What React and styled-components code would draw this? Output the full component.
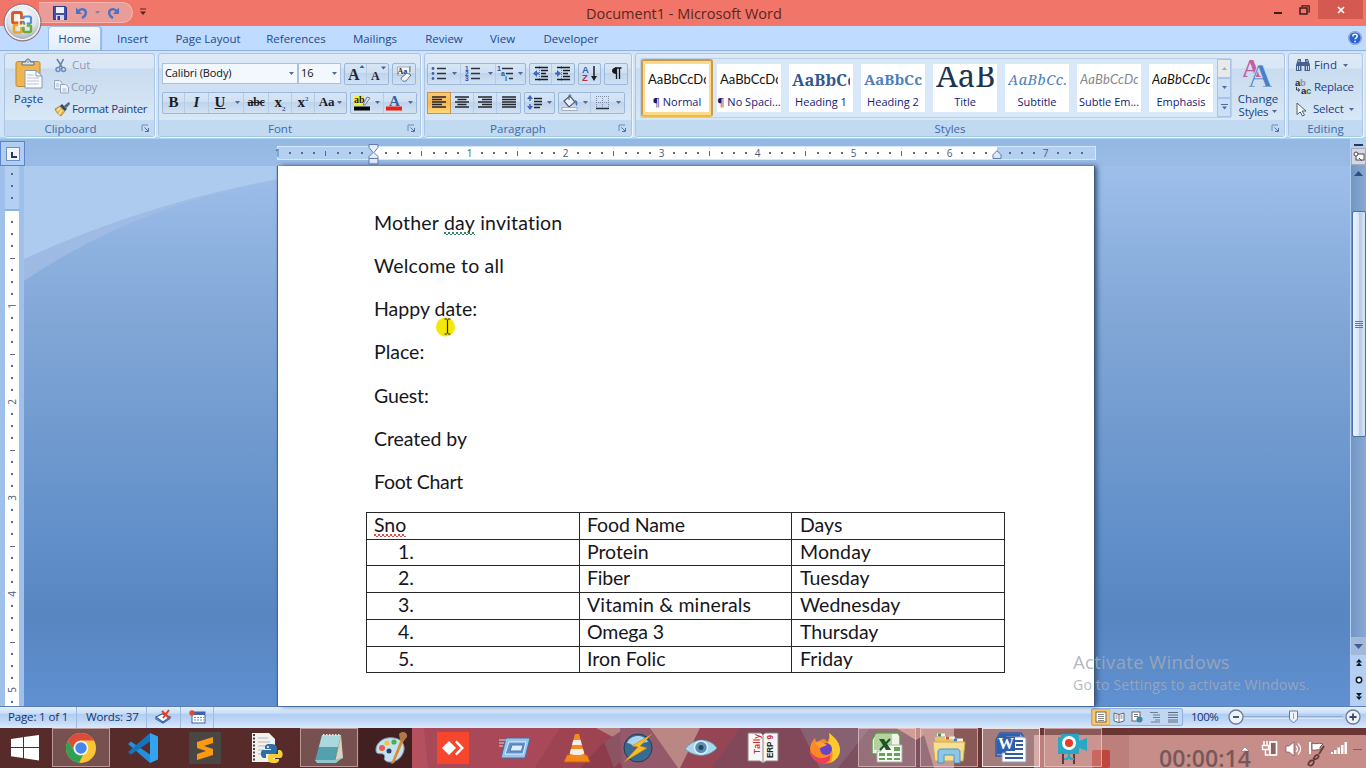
import React from "react";
import styled, { createGlobalStyle, css } from "styled-components";

const Global = createGlobalStyle`
  *{box-sizing:border-box}
  html,body{margin:0;padding:0;overflow:hidden}
  body{width:1366px;height:768px;font-family:"Open Sans","Noto Sans",sans-serif;font-size:11.5px;color:#15428b}
  svg{display:block;flex:none}
`;

/* ---------- shell ---------- */
const Shell = styled.div`
  width:1366px;height:768px;display:flex;flex-direction:column;overflow:hidden;position:relative;background:#9abbe6;
`;
const TitleBar = styled.header`
  height:26px;flex:none;background:#f17569;display:flex;align-items:flex-start;
`;
const QuickAccess = styled.div`
  width:94px;height:21px;margin:2px 0 0 39px;display:flex;align-items:center;gap:1px;padding-left:14px;
  background:#e99c98;border:1px solid #f3b5ae;border-left:none;border-radius:0 11px 11px 0;
`;
const QuickMore = styled.div`padding:8px 0 0 7px;`;
const Title = styled.h1`
  margin:0 0 0 439px;width:204px;font-weight:400;font-size:14.5px;line-height:27.5px;color:#582720;white-space:nowrap;
`;
const WindowButtons = styled.div`
  margin-left:auto;display:flex;align-items:flex-start;padding-right:3px;
`;
const WinButton = styled.div`
  width:${p => p.$w}px;height:19px;display:flex;align-items:center;justify-content:center;background:${p => p.$close ? "#d45a51" : "transparent"};
`;
const Orb = styled.div`position:absolute;left:3px;top:3px;width:39px;height:39px;z-index:3;`;

const Tabs = styled.nav`
  height:24px;flex:none;display:flex;align-items:flex-end;background:#bfdbff;padding-left:48px;
`;
const Tab = styled.div`
  width:${p => p.$w}px;height:23px;line-height:23px;text-align:center;font-size:11.5px;white-space:nowrap;color:#234a8c;
  ${p => p.$active && css`
    height:24px;line-height:23px;background:linear-gradient(#f4f8fd,#e3edf8);border:1px solid #9dc0ea;border-bottom:none;border-radius:4px 4px 0 0;
    box-shadow:1px 0 1px #8fb4e6;
  `}
`;
const Help = styled.div`margin-left:auto;padding:0 4px 5px 0;`;

/* ---------- ribbon ---------- */
const Ribbon = styled.section`
  height:89px;flex:none;display:flex;gap:3px;padding:2px 3px 2px 4px;
  background:#d1e3f6;border-top:1px solid #8db2e3;border-bottom:2px solid #a6d6f2;
`;
const Group = styled.div`
  width:${p => p.$w}px;height:84px;display:flex;flex-direction:column;border:1px solid #aac6e4;border-radius:3px;overflow:hidden;
  background:linear-gradient(#dee9f5 0,#d9e6f4 14px,#c9dbef 15px,#d8e8f6 68px);
  box-shadow:1px 1px 0 #eef6fd;
`;
const GroupBody = styled.div`flex:1;min-height:0;display:flex;padding:${p => p.$p || "0"};`;
const GroupLabel = styled.div`
  height:16px;flex:none;background:#c1d9f1;display:flex;align-items:center;color:#3e6aaa;font-size:11.5px;
  span{flex:1;text-align:center;line-height:15px;padding-right:${p => p.$pr || 0}px}
  svg{margin-right:4px}
`;
const BigButton = styled.div`
  width:${p => p.$w}px;display:flex;flex-direction:column;align-items:center;line-height:13px;font-size:11.5px;color:#15428b;padding-top:${p => p.$top}px;
`;
const BigText = styled.div`display:flex;align-items:center;gap:4px;height:13px;margin-top:${p => p.$mt || 0}px;letter-spacing:${p => p.$ls || 0}px;`;
const CommandList = styled.div`display:flex;flex-direction:column;padding:${p => p.$p};`;
const Command = styled.div`
  height:22px;display:flex;align-items:center;gap:${p => p.$gap || 3}px;font-size:11.5px;line-height:16px;white-space:nowrap;color:${p => p.$dim ? "#8d9bb4" : "#1d3f86"};
  letter-spacing:${p => p.$ls || 0}px;
`;
const Rows = styled.div`display:flex;flex-direction:column;gap:7px;`;
const Row = styled.div`display:flex;gap:${p => p.$gap}px;`;
const Combo = styled.div`
  width:${p => p.$w}px;height:21px;background:#f3f8fe;border:1px solid #abc1de;display:flex;align-items:center;justify-content:space-between;
  color:#111;font-size:11px;line-height:14px;padding:0 3px 1px 2px;letter-spacing:-.1px;
`;
const Segment = styled.div`
  height:22px;display:flex;border:1px solid #9ab7dc;border-radius:2px;
  background:linear-gradient(#d8e7f6 0,#cfdff1 45%,#bfd3eb 46%,#d0e1f3 100%);
`;
const Cell = styled.div`
  width:${p => p.$w}px;display:flex;align-items:center;justify-content:center;padding-bottom:2px;
  ${p => p.$edge && css`border-right:1px solid #b5cbe6;`}
  ${p => p.$on && css`background:linear-gradient(#fbc87c,#fdb54c 50%,#ffd87a);box-shadow:0 0 0 1px #c79346;`}
`;
const Glyph = styled.span`
  font-family:"Liberation Serif",serif;font-weight:700;color:#1d1d26;font-size:${p => p.$s || 15}px;line-height:16px;
  font-style:${p => p.$i ? "italic" : "normal"};text-decoration:${p => p.$d || "none"};letter-spacing:${p => p.$ls || 0}px;
  sup,sub{font-size:7px;line-height:0;color:#3156a8}
`;

/* ---------- styles gallery ---------- */
const Gallery = styled.div`
  width:592px;height:60px;display:flex;border:1px solid #b9d0ed;background:#d9e8f8;border-radius:2px;
`;
const StyleCard = styled.div`
  width:72px;height:58px;padding:5px 4px;
  ${p => p.$on && css`padding:3px 2px;border:2px solid #cf9a48;border-bottom-color:#eebb40;border-radius:3px;background:#fcd98d;`}
`;
const StyleInner = styled.div`
  width:64px;height:48px;background:#fff;overflow:hidden;display:flex;flex-direction:column;
`;
const Sample = styled.div`
  height:28px;margin:3px 3px 0;overflow:hidden;white-space:nowrap;line-height:${p => p.$lh || 25}px;
  font-family:${p => p.$f || "Lato"},sans-serif;font-size:${p => p.$s || 13}px;color:${p => p.$c || "#111"};font-weight:${p => p.$b ? 700 : 400};
  font-style:${p => p.$i ? "italic" : "normal"};letter-spacing:${p => p.$ls || 0}px;
`;
const StyleName = styled.div`
  height:17px;line-height:13px;text-align:center;color:#151a75;font-size:11px;white-space:nowrap;
`;
const GalleryNav = styled.div`width:14px;display:flex;flex-direction:column;`;
const NavButton = styled.div`
  flex:1;border:1px solid #a9c4e6;display:flex;align-items:center;justify-content:center;background:${p => p.$off ? "#e8e9eb" : "#cbdff5"};
`;

/* ---------- workspace ---------- */
const Workspace = styled.main`
  height:567px;flex:none;display:flex;background:#9abbe6;
`;
const Main = styled.div`width:1350px;display:flex;flex-direction:column;`;
const RulerRow = styled.div`height:27px;display:flex;align-items:center;position:relative;background:linear-gradient(#94b8e3,#9abbe5);`;
const TabSelector = styled.div`
  width:25px;height:25px;margin:2px 252px 0 0;border:1px solid #5b86cd;background:#b1cdf2;display:flex;align-items:center;justify-content:center;
`;
const TabBox = styled.div`width:14px;height:14px;border:1px solid #6c8fc6;background:#f0f5fc;padding:4px 0 0 4px;`;
const HRuler = styled.div`
  width:819px;height:14px;margin-top:1px;border:1px solid #d4e8fc;display:flex;
  background:linear-gradient(90deg,#b3cff2 0 96px,#fff 96px 719px,#b3cff2 719px);
`;
const HMark = styled.span`
  width:12px;flex:none;margin-left:${p => p.$first ? "-6.5px" : 0};height:12px;line-height:12px;font-size:10px;color:#4d5a74;display:flex;align-items:center;justify-content:center;
`;
const Dot = styled.i`width:2px;height:2px;background:#5b6880;`;
const Tick = styled.i`width:${p => p.$v ? 5 : 1}px;height:${p => p.$v ? 1 : 5}px;background:#5b6880;`;
const Marker = styled.div`position:absolute;left:${p => p.$x}px;top:${p => p.$y}px;`;
const Canvas = styled.div`
  flex:1;min-height:0;display:flex;position:relative;
  background:linear-gradient(#9fbfeb 0,#8eb2e0 80px,#7fa5d5 170px,#618fc9 370px,#5886c1 450px,#6090d1 540px);
`;
const VRuler = styled.div`width:24px;flex:none;padding:0 5px;background:#9fc0ea;z-index:1;`;
const VStrip = styled.div`
  width:14px;height:540px;overflow:hidden;
  background:linear-gradient(#b3cff2 0 43px,#8eb1e0 43px 45px,#fff 45px);
`;
const VMark = styled.div`
  height:12px;display:flex;align-items:center;justify-content:center;font-size:10px;color:#4d5a74;line-height:12px;
  margin-top:${p => p.$first ? "2px" : 0};
  span{transform:rotate(-90deg)}
`;
const Wave = styled.svg`position:absolute;left:24px;top:0;`;
const Page = styled.article`
  width:816px;margin-left:254px;background:#fff;position:relative;padding:34.5px 0 0 88px;color:#16161c;
  box-shadow:1px 0 0 #3d5779,3px 0 5px #33557e,-1px 0 1px #47699b;
  font-family:Lato,Carlito,sans-serif;font-size:19.5px;font-variant-ligatures:none;
`;
const Para = styled.p`
  margin:0 0 0 8px;height:43.3px;line-height:43.3px;white-space:nowrap;letter-spacing:${p => p.$ls || 0}px;
`;
const Wavy = styled.span`
  position:relative;
  &::after{
    content:"";position:absolute;left:0;right:0;bottom:-1px;height:3px;
    background:
      linear-gradient(45deg,transparent 35%,${p => p.$c} 35% 55%,transparent 55%) 0 0/4px 3px repeat-x,
      linear-gradient(-45deg,transparent 35%,${p => p.$c} 35% 55%,transparent 55%) 2px 0/4px 3px repeat-x;
  }
`;
const Table = styled.div`
  width:639px;display:grid;grid-template-columns:213px 212px 213px;grid-template-rows:27px 26px 27px 27px 27px 26px;
  border:1px solid #26262b;border-width:1px 0 0 1px;margin-top:8.4px;
`;
const TD = styled.div`
  border:1px solid #26262b;border-width:0 1px 1px 0;padding-left:${p => p.$pl}px;line-height:24px;white-space:nowrap;letter-spacing:${p => p.$ls || 0}px;
`;
const Pointer = styled.div`position:absolute;left:435px;top:315px;`;

/* ---------- scroll bar ---------- */
const Scroll = styled.aside`
  width:16px;display:flex;flex-direction:column;align-items:center;background:#b4cff1;padding-left:1px;
`;
const SplitBar = styled.div`width:9px;height:2px;background:#26395d;margin:5px 0 2px;`;
const RulerToggle = styled.div`width:15px;height:17px;background:#d3d8e3;border:1px solid #a9a9b8;display:flex;align-items:center;justify-content:center;`;
const Track = styled.div`width:15px;height:490px;display:flex;flex-direction:column;align-items:center;background:linear-gradient(90deg,#7296c4,#87a9d3);`;
const ArrowBox = styled.div`
  width:15px;height:${p => p.$h}px;display:flex;align-items:center;justify-content:center;
  ${p => p.$bottom && css`margin-top:auto;background:#a2b9da;`}
`;
const Thumb = styled.div`
  width:14px;height:226px;margin-top:30px;border:1px solid #4a6fa9;background:linear-gradient(90deg,#e9f2fd 0,#dce9fa 45%,#b6c9e4 55%,#dce8f8 100%);border-radius:2px;
  display:flex;flex-direction:column;align-items:center;justify-content:center;gap:1px;
  i{width:8px;height:1px;background:#5a78aa}
`;
const Browse = styled.div`flex:1;display:flex;flex-direction:column;justify-content:space-between;align-items:center;padding:4px 0 6px;`;

/* ---------- status bar ---------- */
const StatusBar = styled.footer`
  height:22px;flex:none;display:flex;align-items:stretch;border-top:1px solid #5a7fb5;color:#15336e;font-size:11.5px;
  background:linear-gradient(#e4effd 0,#c9def7 30%,#b0cdf1 35%,#c5dbf7 75%,#d9eafd);
`;
const StatusItem = styled.div`
  width:${p => p.$w}px;padding:0 0 2px ${p => p.$pl || 0}px;display:flex;align-items:center;white-space:nowrap;letter-spacing:-.15px;border-right:1px solid #9dbbe0;
`;
const Views = styled.div`
  margin-left:auto;width:92px;height:18px;margin-top:1px;display:flex;border:1px solid #8fb0dc;border-radius:2px;background:#c0d6f1;
`;
const View = styled.div`width:18px;display:flex;align-items:center;justify-content:center;${p => p.$on && css`background:#fcc86c;box-shadow:inset 0 0 0 1px #eab55e;`}`;
const Zoom = styled.div`width:183px;display:flex;align-items:center;padding:0 0 2px 8px;`;
const Percent = styled.span`width:36px;font-size:11.5px;letter-spacing:-.5px;`;

/* ---------- taskbar ---------- */
const Taskbar = styled.footer`
  height:40px;flex:none;display:flex;position:relative;overflow:hidden;background:#562b2a;
`;
const Wallpaper = styled.svg`position:absolute;left:0;top:0;`;
const Start = styled.div`width:50px;display:flex;align-items:center;justify-content:center;position:relative;`;
const AppButton = styled.div`
  width:58px;height:39px;margin:0 2px;display:flex;align-items:center;justify-content:center;position:relative;
  ${p => p.$open && css`background:rgba(255,235,235,.2);border:1px solid rgba(255,225,225,.5);`}
  ${p => p.$active && css`background:rgba(255,245,245,.38);border-color:rgba(255,240,240,.85);`}
`;
const Tray = styled.div`margin-left:auto;width:262px;position:relative;display:flex;align-items:flex-start;`;
const Timer = styled.div`
  position:absolute;left:55px;top:14px;font-family:"Open Sans",sans-serif;font-weight:600;font-size:23px;line-height:32px;color:#76585a;letter-spacing:.05px;
`;
const TrayIcons = styled.div`margin-left:136px;padding-top:12px;display:flex;align-items:flex-start;gap:5px;position:relative;`;
const TrayArrow = styled.div`padding:6px 6px 0 0;`;
const Watermark = styled.div`
  position:absolute;left:1073px;top:649px;color:#a3abb7;opacity:.82;z-index:4;white-space:nowrap;
  div:first-child{font-size:18.5px;line-height:25px;letter-spacing:.32px}
  div:last-child{font-size:14px;line-height:22px;letter-spacing:.2px}
`;

/* ---------- icons ---------- */
const Svg = ({ w = 16, h = 16, children, vb }) => (
  <svg width={w} height={h} viewBox={vb || `0 0 ${w} ${h}`} fill="none">{children}</svg>
);
const Down = ({ c = "#4f6b9d" }) => <Svg w={5} h={3}><path d="M0 0h5L2.5 3z" fill={c} /></Svg>;
const Launcher = () => <Svg w={9} h={9}><path d="M1 7V1h6" stroke="#6a8cbd" /><path d="M3.500 3.500L7 7M7.500 4v3.500H4" stroke="#4f71a6" /></Svg>;

const OfficeOrb = () => (
  <Svg w={39} h={39}>
    <defs>
      <radialGradient id="orb" cx=".5" cy=".35" r=".65"><stop offset="0" stopColor="#fff" /><stop offset=".6" stopColor="#dfe3ea" /><stop offset="1" stopColor="#9aa3b2" /></radialGradient>
    </defs>
    <circle cx="19.500" cy="19.500" r="18.500" fill="url(#orb)" stroke="#8c6a73" />
    <circle cx="19.500" cy="19.500" r="17" stroke="#f7f9fc" strokeWidth="1.200" />
    <rect x="9.500" y="9.500" width="9" height="10.500" rx="1.500" stroke="#e0581c" strokeWidth="2.800" />
    <rect x="20.500" y="13.500" width="7.500" height="7" rx="1.500" stroke="#4a93d9" strokeWidth="2.200" />
    <rect x="11" y="22" width="7.500" height="7.500" rx="1.500" stroke="#f0a621" strokeWidth="2.600" />
    <rect x="20.500" y="22.500" width="7.500" height="6.500" rx="1.500" stroke="#6aab3c" strokeWidth="2.500" />
    <path d="M16 17h7v6h-7z" stroke="#fff" strokeWidth="1.300" />
  </Svg>
);
const Save = () => (
  <Svg w={14} h={14}><path d="M.5.5h12l1 1v12H.5z" fill="#4250a9" stroke="#31378a" /><rect x="3" y="1" width="8" height="6" fill="#eef2fb" /><rect x="3" y="9" width="8" height="5" fill="#d3d7e5" /><rect x="4.500" y="10" width="2.500" height="4" fill="#31378a" /></Svg>
);
const Undo = ({ flip }) => (
  <Svg w={14} h={14}><g transform={flip ? "translate(14 0) scale(-1 1)" : undefined}><path d="M3 5.500C6 1.500 11.500 3 10.800 7.500 10.500 9.500 9 11 7 12" stroke="#4a72c4" strokeWidth="2.300" /><path d="M1 1.500v6.500h6z" fill="#4a72c4" /></g></Svg>
);
const PasteIcon = () => (
  <Svg w={28} h={31}>
    <rect x="1" y="3.500" width="24" height="25" rx="2" fill="#eeb64d" stroke="#bf8a34" />
    <path d="M7 7V4h3.500c0-4 5-4 5 0H19v3z" fill="#d9dde5" stroke="#69707f" />
    <circle cx="13" cy="3" r="1.300" fill="#fff" stroke="#69707f" strokeWidth=".7" />
    <path d="M10 12.500h11l6 5.500v12H10z" fill="#fbfcfe" stroke="#8998b4" />
    <path d="M21 12.500V18h6" stroke="#8998b4" /><path d="M12 17h7M12 20h12M12 23h12M12 26h12" stroke="#b7c3d8" />
  </Svg>
);
const Cut = () => <Svg w={14} h={15}><path d="M3 1l5.500 9M9.500 1L5 10" stroke="#6e83a5" strokeWidth="1.600" /><circle cx="4" cy="11.500" r="2" stroke="#6b8dc0" strokeWidth="1.500" /><circle cx="9.500" cy="11.500" r="2" stroke="#6b8dc0" strokeWidth="1.500" /></Svg>;
const Copy = () => <Svg w={16} h={14}><path d="M.5.500h5l2.500 2V9H.5z" fill="#eef3fa" stroke="#96a5bf" /><path d="M6.500 4.500h5l3 2.500v6h-8z" fill="#f2f6fb" stroke="#96a5bf" /><path d="M8.500 9h4M8.500 11h4M2 4h3M2 6h3" stroke="#a9b7ce" /></Svg>;
const Painter = () => (
  <Svg w={17} h={15}><path d="M1 7l5-3 5 5-4 5C4 12 2 10 1 7z" fill="#e9b649" stroke="#a67b2a" strokeWidth=".8" /><path d="M3 9l3-3M5 12l3-4" stroke="#fbe7a6" strokeWidth="1.500" /><path d="M6 4l2-2 5 5-2 2z" fill="#3a4668" /><path d="M10 4l4-3.500c1.500-.5 2.500.5 1.500 2L12.500 6z" fill="#586787" /></Svg>
);
const GrowA = ({ small }) => (
  <Svg w={18} h={18}><text x={small ? 2 : 1} y="15.500" fontFamily="Liberation Serif" fontWeight="700" fontSize={small ? 12 : 16} fill="#24262f">A</text><path d={small ? "M12 2.500h5L14.500 5.500z" : "M12.500 4h5L15 1z"} fill="#3c62a9" /></Svg>
);
const ClearFmt = () => (
  <Svg w={18} h={18}><path d="M2.500 3h12v8h-12z" fill="#f5f8fc" stroke="#8a93a8" strokeWidth=".7" /><text x="2.500" y="10" fontSize="8" fontWeight="700" fontFamily="Liberation Serif" fill="#2b2b33">Aa</text><path d="M15 2v6" stroke="#6d778c" /><path d="M6 14l6-5 4 2-5 6c-3 1-5-1-5-3z" fill="#f4f6fa" stroke="#65728c" /></Svg>
);
const Highlight = () => (
  <Svg w={18} h={17}><rect x="1" y="1" width="10" height="10" fill="#f4ee3c" /><text x="1" y="9" fontSize="10" fontWeight="700" fontFamily="Liberation Serif" fill="#222">ab</text><path d="M10 11l4-8 3 1-5 7z" fill="#dfe5ef" stroke="#5b6880" strokeWidth=".8" /><rect x="1" y="12.500" width="16" height="4" fill="#050505" /></Svg>
);
const FontColor = () => <Svg w={17} h={17}><text x="3" y="11.500" fontSize="15" fontWeight="700" fontFamily="Liberation Serif" fill="#3b5f9f">A</text><rect x="0" y="12.500" width="16" height="4" fill="#ed1f14" /></Svg>;
const ListIcon = ({ num }) => (
  <Svg w={16} h={15}>
    {[2, 7, 12].map((y, i) => <g key={y}>{num
      ? <text x="0" y={y + 2.5} fontSize="6.500" fontWeight="700" fill="#2c4f9e" fontFamily="Liberation Sans">{i + 1}</text>
      : <circle cx="2" cy={y + .5} r="1.400" fill="#3d62ad" />}<path d={`M6 ${y + .5}h9`} stroke="#2c3038" strokeWidth="1.300" /></g>)}
  </Svg>
);
const MultiList = () => (
  <Svg w={18} h={17}><g fontSize="7" fontWeight="700" fill="#2c4f9e" fontFamily="Liberation Sans"><text x="0" y="6">1</text><text x="4" y="11">a</text><text x="8" y="16">i</text></g><path d="M5 3.500h11M9 8.500h7M12 13.500h4" stroke="#2c3038" strokeWidth="1.300" /></Svg>
);
const Indent = ({ right }) => (
  <Svg w={16} h={15}><path d="M2 1.500h13M8 4.500h7M8 7.500h5M8 10.500h7M2 13.500h13" stroke="#1b1d22" strokeWidth="1.500" /><path d="M6.500 0v15" stroke="#6b7689" strokeDasharray="1 1" /><path d={right ? "M0 6.500h2V4l4 3.500-4 3.500V8.500H0z" : "M6 6.500H4V4L0 7.500 4 11V8.500h2z"} fill="#3e66bd" /></Svg>
);
const Sort = () => <Svg w={16} h={17}><text x="0" y="7.500" fontSize="9.500" fontWeight="700" fill="#3b5fae" fontFamily="Liberation Sans">A</text><text x="0" y="16" fontSize="9.500" fontWeight="700" fill="#a8354a" fontFamily="Liberation Sans">Z</text><path d="M12 1v11" stroke="#1b1d22" strokeWidth="1.500" /><path d="M9 11h6l-3 5z" fill="#1b1d22" /></Svg>;
const Pilcrow = () => <Svg w={11} h={13}><path d="M4 1h6.500M5.500 1v11M8.500 1v11" stroke="#15171c" strokeWidth="1.300" /><path d="M5.500.500v6.500C-.5 7-.5.500 5.500.500z" fill="#15171c" /></Svg>;
const Align = ({ kind }) => {
  const short = { l: "M0 3.500h10M0 8.500h10", c: "M2.500 3.500h9M2.500 8.500h9", r: "M4 3.500h10M4 8.500h10", j: "M0 3.500h14M0 8.500h14" }[kind];
  return <Svg w={14} h={12}><path d="M0 1h14M0 6h14M0 11h14" stroke="#24262c" strokeWidth="1.300" /><path d={short} stroke="#24262c" strokeWidth="1.300" /></Svg>;
};
const Spacing = () => <Svg w={16} h={17}><path d="M3 5v2M3 10v2" stroke="#3e66bd" strokeWidth="1.500" /><path d="M0 5l3-4 3 4zM0 12h6l-3 4z" fill="#3e66bd" /><path d="M7 4.500h8M7 7.500h8M7 10.500h8M7 13.500h6" stroke="#23262c" strokeWidth="1.300" /></Svg>;
const Bucket = () => <Svg w={18} h={17}><path d="M3 7l6-5 5 6-6 5z" fill="#eef3fa" stroke="#465b86" strokeWidth="1.200" /><path d="M8 6V1.500c0-1 2-1 2 0" stroke="#465b86" /><path d="M14 6c3 1 3 4 1.500 6-1-1-1-3-1.500-6z" fill="#3f6fc4" /><rect x="1" y="13.500" width="15" height="3" fill="#f4f6fa" stroke="#8e99ae" strokeWidth=".7" /></Svg>;
const Borders = () => <Svg w={15} h={15}><path d="M1 1.500h13M1.500 1v12M13.500 1v12M7.500 1v12M1 7.500h13" stroke="#7c8aa5" strokeDasharray="1 1" /><path d="M1 13.500h13" stroke="#2b303b" strokeWidth="1.300" /></Svg>;
const ChangeStylesIcon = () => <Svg w={30} h={31}><text x="-1" y="19" fontFamily="Liberation Serif" fontWeight="700" fontSize="26" fill="#c25fa5">A</text><text x="5" y="29" fontFamily="Liberation Serif" fontWeight="700" fontSize="34" fill="#4a81c6" stroke="#e1ecf8" strokeWidth=".6">A</text></Svg>;
const Binoculars = () => <Svg w={16} h={14}><path d="M3 1h3v3h4V1h3l2 6v6H9.500V8h-3v5H1V7z" fill="#47608f" /><path d="M3 3h2M11 3h2M2.500 8v4M4.500 8v4M11.500 8v4M13.500 8v4" stroke="#c6d5ec" /></Svg>;
const ReplaceIcon = () => <Svg w={17} h={16}><g fontFamily="Liberation Sans" fontWeight="700" fontSize="9.500"><text x="0" y="7" fill="#20242e">a<tspan fill="#8a93a5">b</tspan></text><text x="6" y="14.500" fill="#20242e">a<tspan fill="#2e7c35">c</tspan></text></g><path d="M1.500 8v3h3M3 9.500L4.800 11 3 12.500" stroke="#39445c" /></Svg>;
const Arrow = () => <Svg w={13} h={15}><path d="M2 1l9 8H7l2.500 4-2 1-2.300-4L2 12.500z" fill="#fff" stroke="#4d5d7c" /></Svg>;
const HelpIcon = () => <Svg w={14} h={14}><circle cx="7" cy="7" r="6.300" fill="#2a62d2" stroke="#dce8fb" /><circle cx="7" cy="7" r="6.700" stroke="#506fae" strokeWidth=".5" /><path d="M4.800 5.500c0-3 4.400-2.800 4.400-.2 0 1.500-2.100 1.500-2.100 3M7.100 9.700v1.500" stroke="#fff" strokeWidth="1.500" /></Svg>;

/* taskbar artwork */
const art = {
  chrome: <Svg w={32} h={32}><circle cx="16" cy="16" r="15" fill="#fbc632" /><path d="M3 8.500A15 15 0 0 1 29 8.500H16a7.500 7.500 0 0 0-6.500 11.300z" fill="#de4a3a" /><path d="M3 8.500l6.500 11.300A7.500 7.500 0 0 0 18 23l-4 7.900A15 15 0 0 1 3 8.500z" fill="#2fa157" /><circle cx="16" cy="16" r="7.300" fill="#f4f4f4" /><circle cx="16" cy="16" r="5.700" fill="#4687ee" /></Svg>,
  code: <Svg w={32} h={32}><path d="M23 1l8 3.500v23L23 31V1z" fill="#33a5ef" /><path d="M4 9.500L1 12l22 19v-8.500z" fill="#258fd9" /><path d="M4 22.500L1 20 23 1v8.500z" fill="#1574ba" /></Svg>,
  sublime: <Svg w={32} h={32}><rect width="32" height="32" rx="2" fill="#4a4644" /><path d="M8 10l16-5v6l-9 3 9 3v6L8 28v-6l9-3-9-3z" fill="#fb9a10" /></Svg>,
  python: <Svg w={32} h={32}><path d="M1 1h17l6 6v23H1z" fill="#f3f1ee" /><path d="M3 2v28" stroke="#4d4040" strokeWidth="2" strokeDasharray="2 1.500" /><path d="M7 6h10M7 10h12M7 14h9M7 18h6M7 22h5" stroke="#b9b5b2" /><path d="M19 12c-5 0-5 2-5 5h6v1h-8c-3 0-3 8 1 8h2v-4h8c3 0 3-2 3-5 0-4-2-5-7-5z" fill="#2f6ea9" /><path d="M23 31c5 0 5-2 5-4h-6v-1h7c4 0 3-8 0-8h-2v4h-7c-3 0-3 2-3 4 0 4 1 5 6 5z" fill="#f8cf38" /><circle cx="17" cy="15" r="1" fill="#fff" /></Svg>,
  notepad: <Svg w={32} h={32}><path d="M9 3h19l-6 26H2z" fill="#55a0ae" /><path d="M9 3h19l-3 12H6z" fill="#a9d8dd" /><path d="M28 3l2 23-8 4z" fill="#d9d3bd" /><path d="M2 28h20l8-3-7 6H4z" fill="#8ec7cf" /><path d="M10 3h18" stroke="#d6e4e6" strokeWidth="2" strokeDasharray="1.500 1.500" /></Svg>,
  paint: <Svg w={34} h={34}><path d="M2 20C1 12 10 5 20 7c9 1 12 9 9 15-3 8-13 11-17 8-4-2 1-5-3-7-3-1-6 1-7-3z" fill="#c5e0f1" stroke="#7a9cb6" /><circle cx="8" cy="17" r="3" fill="#e66343" /><circle cx="13" cy="12" r="2.600" fill="#f3c53b" /><circle cx="20" cy="11" r="2.600" fill="#4aae4e" /><circle cx="15" cy="20" r="2.500" fill="#2d3f66" /><path d="M27 8l3 1-10 23-3 1z" fill="#d98d35" /><path d="M25 3c4-4 9-1 8 3l-4 5-3-2z" fill="#ae7848" /></Svg>,
  anydesk: <Svg w={32} h={32}><rect width="32" height="32" fill="#f6462e" /><path d="M12 9l7 7-7 7-7-7z" fill="#fff" /><path d="M18 10.200l1.700-1.700L27 16l-7.300 7.500-1.700-1.700 5.700-5.800z" fill="#fff" /></Svg>,
  run: <Svg w={32} h={22}><path d="M7 1h24l-5 20H2z" fill="#98c5ec" stroke="#496d9b" /><path d="M10 5h17l-3 12H6z" fill="#5e91ce" stroke="#dbeefd" /><path d="M13 8h11l-1.500 6H11z" fill="#dbeefd" stroke="#5a72a2" /><path d="M0 3h7M0 6h5M0 9h4" stroke="#c7d9ee" /></Svg>,
  vlc: <Svg w={28} h={32}><path d="M4 23h20l3 7H1z" fill="#f5881b" stroke="#c56312" /><path d="M12 2h4l6 22c-3 3-13 3-16 0z" fill="#f68a1e" /><path d="M10.500 8h7l1.400 5h-10zM8 17h12l1.300 4.500c-4 2-10 2-14.600 0z" fill="#f3efec" /></Svg>,
  bolt: <Svg w={32} h={32}><circle cx="15" cy="16" r="14" fill="#396b92" stroke="#253a53" /><path d="M4 11c4-9 17-9 21-1-5-1-8 5-13 4-3 0-4-3-8-3z" fill="#a9d4e9" /><path d="M29 2L9 14l6 1L1 30l23-14-7-2z" fill="#f9bd24" stroke="#c97f11" strokeWidth=".6" /></Svg>,
  eye: <Svg w={34} h={18}><path d="M1 10C9-1 25-2 33 9 24 19 10 18 1 10z" fill="#a9d8ec" stroke="#6799b4" /><circle cx="17" cy="8.500" r="6.500" fill="#5b8eb0" stroke="#daf0f9" strokeWidth="1.500" /><circle cx="17" cy="8.500" r="2.500" fill="#25435e" /></Svg>,
  tally: <Svg w={32} h={32}><path d="M1 1h13l2 2 2-2h13v28H19l-3 2-3-2H1z" fill="#f9f7f5" stroke="#8c8384" /><path d="M16 3v27" stroke="#8c8384" /><text transform="translate(12.500 22) rotate(-90)" fontSize="9.500" fontFamily="Open Sans" fontWeight="600" textLength="20" lengthAdjust="spacingAndGlyphs" fill="#cc2a2c">Tally</text><text transform="translate(26 26) rotate(-90)" fontSize="8.500" fontFamily="Liberation Sans" fontWeight="700" textLength="23" lengthAdjust="spacingAndGlyphs" fill="#222">ERP <tspan fill="#cc2a2c">9</tspan></text></Svg>,
  firefox: <Svg w={32} h={32}><path d="M20 1c5 4 11 9 11 17a15 13.500 0 0 1-30 0C1 13 3 9 6 6l1 4 5-2c2-2 5-1 6 2 2-3 3-6 2-9z" fill="#fb8a25" /><path d="M20 1c5 4 11 9 11 17 0 5-4 11-10 13 5-8 2-15-2-19 2-4 2-8 1-11z" fill="#fdc931" /><path d="M1 17c2 9 13 12 20 6 1 4-1 7-5 8.500C8 32 1 26 1 17z" fill="#ee3f57" /><circle cx="17" cy="17" r="6" fill="#6a42c5" /><path d="M6 11c5-2 8-1 12 2l-7 3z" fill="#fca13a" /></Svg>,
  excel: <Svg w={32} h={32}><path d="M5 1h22l2 3v18H1V8z" fill="#eef5e8" stroke="#63964f" strokeWidth="1.500" /><path d="M5 2h16v16H3V8z" fill="#b4d29d" /><path d="M10 13h21v17H6V19h4z" fill="#f8faf6" stroke="#a7b69e" /><path d="M23 15h6v4h-6zM16 21h5v3h-5zM23 21h6v3h-6zM8 21h6v3H8zM16 26h5v2h-5zM23 26h6v2h-6zM8 26h6v2H8z" fill="#65a25a" /><path d="M8 7h5l7 11h-5z" fill="#1c5927" /><path d="M19 7L9 18" stroke="#1c5927" strokeWidth="2" /></Svg>,
  folder: <Svg w={34} h={32}><path d="M3 5h10l2 3h16v21H3z" fill="#e6c46c" /><path d="M5 3h8M13 6h10M22 8h9" stroke="#f8f1df" strokeWidth="3" /><path d="M6 3h3" stroke="#3f9b4c" strokeWidth="3" /><path d="M14 6h3" stroke="#d65233" strokeWidth="3" /><path d="M22 8h3" stroke="#3a7fce" strokeWidth="3" /><path d="M1 10h32l-2 19H3z" fill="#f6df95" stroke="#d1a94c" /><path d="M6 31V20c0-2 1-3 3-3h16c2 0 3 1 3 3v11h-6v-8H12v8z" fill="#8dc7e7" stroke="#5192bd" /></Svg>,
  word: <Svg w={32} h={32}><path d="M5 1h21l2 3v20H1V8z" fill="#7f9fd4" stroke="#335a9f" strokeWidth="1.500" /><path d="M5 2h20v20H2V9z" fill="#2e5eaf" /><path d="M11 5h17l3 1v24H7V21h4z" fill="#fbfcfe" stroke="#8da0c4" /><path d="M20 9h8M21 13h7M20 17h8M10 22h18M10 26h18" stroke="#355b9f" strokeWidth="2" /><rect x="3" y="5" width="17" height="14" fill="#2e5eaf" /><text x="3" y="17" fontFamily="Liberation Serif" fontWeight="700" fontSize="16" fill="#fff">W</text></Svg>,
  recorder: <Svg w={34} h={32}><path d="M5 2h18v7l8-3v13l-8-3v6H2V5h3z" fill="#28a8c4" /><circle cx="13" cy="11" r="7" fill="#fff" /><circle cx="13" cy="11" r="4" fill="#e63b28" /><path d="M7 22v10M18 22v10" stroke="#603a3b" strokeWidth="2" /><path d="M13 22v5M8 27h3l2-3 2 3h3" stroke="#28a8c4" strokeWidth="2" /></Svg>,
};

const tabs = [["Home", 53], ["Insert", 63], ["Page Layout", 88], ["References", 88], ["Mailings", 70], ["Review", 68], ["View", 49], ["Developer", 88]];
const styleCards = [
  { n: "¶ Normal", t: "AaBbCcDc", on: 1 },
  { n: "¶ No Spaci...", t: "AaBbCcDc" },
  { n: "Heading 1", t: "AaBbCc", s: 16.5, c: "#2f5a8f", b: 1, serif: 1 },
  { n: "Heading 2", t: "AaBbCc", s: 15, c: "#4d80bb", b: 1, serif: 1 },
  { n: "Title", t: "AaB", s: 31, c: "#1c3452", serif: 1, lh: 16 },
  { n: "Subtitle", t: "AaBbCc.", s: 14.5, c: "#4d80bb", i: 1, serif: 1, ls: .5 },
  { n: "Subtle Em...", t: "AaBbCcDc", c: "#86888c", i: 1, ls: .2 },
  { n: "Emphasis", t: "AaBbCcDc", i: 1, ls: .2 },
];
const paragraphs = [
  ["Welcome to all", .19], ["Happy date:", 0], ["Place:", 0], ["Guest:", -.15], ["Created by", -.05], ["Foot Chart", -.28],
];
const foods = [
  [["Sno", 0], ["Food Name", -.1], ["Days", 0]],
  [["1.", 0], ["Protein", -.05], ["Monday", .12]],
  [["2.", 0], ["Fiber", -.2], ["Tuesday", 0]],
  [["3.", 0], ["Vitamin & minerals", .14], ["Wednesday", 0]],
  [["4.", 0], ["Omega 3", -.15], ["Thursday", -.1]],
  [["5.", 0], ["Iron Folic", -.02], ["Friday", .1]],
];
const apps = [["chrome", 1], ["code"], ["sublime"], ["python"], ["notepad", 1], ["paint"], ["anydesk"], ["run"], ["vlc"], ["bolt"], ["eye"], ["tally"], ["firefox"], ["excel", 1], ["folder", 1], ["word", 1, 1], ["recorder", 1]];

const cellPad = (row, col) => {
  if (row > 0 && col === 0) return 31;
  return col === 2 ? 8 : 7;
};

const mark = (n, vertical) => {
  const r = ((n % 8) + 8) % 8;
  if (n === 0) return null;
  if (r === 0) return <span>{Math.abs(n / 8)}</span>;
  if (r === 4) return <Tick $v={vertical} />;
  return <Dot />;
};

const FontGroup = () => (
  <Group $w={263}>
    <GroupBody $p="9px 0 0 3px">
      <Rows>
        <Row $gap={3}>
          <Row $gap={0}>
            <Combo $w={136}>Calibri (Body)<Down /></Combo>
            <Combo $w={43}>16<Down /></Combo>
          </Row>
          <Segment><Cell $w={22} $edge><GrowA /></Cell><Cell $w={21}><GrowA small /></Cell></Segment>
          <Segment><Cell $w={22}><ClearFmt /></Cell></Segment>
        </Row>
        <Row $gap={3}>
          <Segment>
            <Cell $w={22} $edge><Glyph>B</Glyph></Cell>
            <Cell $w={24} $edge><Glyph $i>I</Glyph></Cell>
            <Cell $w={22}><Glyph $d="underline">U</Glyph></Cell>
            <Cell $w={13} $edge><Down /></Cell>
            <Cell $w={25} $edge><Glyph $s={12} $d="line-through" $ls={-.4}>abc</Glyph></Cell>
            <Cell $w={23} $edge><Glyph $s={15}>x<sub>2</sub></Glyph></Cell>
            <Cell $w={23} $edge><Glyph $s={15}>x<sup>2</sup></Glyph></Cell>
            <Cell $w={31}><Glyph $s={13} $ls={-.3}>Aa</Glyph>&nbsp;<Down /></Cell>
          </Segment>
          <Segment>
            <Cell $w={21}><Highlight /></Cell><Cell $w={12} $edge><Down /></Cell>
            <Cell $w={20}><FontColor /></Cell><Cell $w={12}><Down /></Cell>
          </Segment>
        </Row>
      </Rows>
    </GroupBody>
    <GroupLabel $pr={6}><span>Font</span><Launcher /></GroupLabel>
  </Group>
);

const ParagraphGroup = () => (
  <Group $w={208}>
    <GroupBody $p="9px 0 0 2px">
      <Rows>
        <Row $gap={3}>
          <Segment>
            <Cell $w={21}><ListIcon /></Cell><Cell $w={12} $edge><Down /></Cell>
            <Cell $w={24}><ListIcon num /></Cell><Cell $w={11} $edge><Down /></Cell>
            <Cell $w={19}><MultiList /></Cell><Cell $w={10}><Down /></Cell>
          </Segment>
          <Segment><Cell $w={22} $edge><Indent /></Cell><Cell $w={22}><Indent right /></Cell></Segment>
          <Segment><Cell $w={21}><Sort /></Cell></Segment>
          <Segment><Cell $w={22}><Pilcrow /></Cell></Segment>
        </Row>
        <Row $gap={3}>
          <Segment>
            <Cell $w={22} $on><Align kind="l" /></Cell><Cell $w={24} $edge><Align kind="c" /></Cell>
            <Cell $w={23} $edge><Align kind="r" /></Cell><Cell $w={23}><Align kind="j" /></Cell>
          </Segment>
          <Segment><Cell $w={19}><Spacing /></Cell><Cell $w={10}><Down /></Cell></Segment>
          <Segment>
            <Cell $w={21}><Bucket /></Cell><Cell $w={11} $edge><Down /></Cell>
            <Cell $w={22}><Borders /></Cell><Cell $w={11}><Down /></Cell>
          </Segment>
        </Row>
      </Rows>
    </GroupBody>
    <GroupLabel $pr={7}><span>Paragraph</span><Launcher /></GroupLabel>
  </Group>
);

const StylesGroup = () => (
  <Group $w={650}>
    <GroupBody $p="4px 0 0 4px">
      <Gallery>
        {styleCards.map(s => (
          <StyleCard key={s.n} $on={s.on}>
            <StyleInner>
              <Sample $f={s.serif ? '"Noto Serif","Liberation Serif"' : "Lato"} $s={s.s} $c={s.c} $b={s.b} $i={s.i} $lh={s.lh} $ls={s.ls}>{s.t}</Sample>
              <StyleName>{s.n}</StyleName>
            </StyleInner>
          </StyleCard>
        ))}
        <GalleryNav>
          <NavButton $off><Svg w={5} h={3}><path d="M0 3h5L2.500 0z" fill="#aaa" /></Svg></NavButton>
          <NavButton><Down /></NavButton>
          <NavButton><Svg w={7} h={6}><path d="M0 .5h7" stroke="#4f6b9d" /><path d="M1 2.500h5L3.500 5.500z" fill="#4f6b9d" /></Svg></NavButton>
        </GalleryNav>
      </Gallery>
      <BigButton $w={52} $top={0}>
        <ChangeStylesIcon />
        <BigText $mt={3}>Change</BigText>
        <BigText $ls={-.2}>Styles<Down /></BigText>
      </BigButton>
    </GroupBody>
    <GroupLabel $pr={7}><span>Styles</span><Launcher /></GroupLabel>
  </Group>
);

export default function App() {
  return (
    <Shell>
      <Global />
      <TitleBar>
        <QuickAccess>
          <Row $gap={8}><Save /><Undo /></Row>
          <ArrowBox $h={14}><Down c="#7d87a8" /></ArrowBox>
          <Undo flip />
        </QuickAccess>
        <QuickMore><Svg w={7} h={8}><path d="M0 1h6" stroke="#522" /><path d="M0 3.500h6L3 7z" fill="#522" /></Svg></QuickMore>
        <Title>Document1 - Microsoft Word</Title>
        <WindowButtons>
          <WinButton $w={26}><Svg w={8} h={8}><path d="M0 7h8" stroke="#3d1d1b" strokeWidth="2" /></Svg></WinButton>
          <WinButton $w={27}><Svg w={11} h={10}><path d="M3 2V.800h7.200V7H8.500" stroke="#3d1d1b" strokeWidth="1.200" /><rect x="1" y="3" width="7" height="6" stroke="#3d1d1b" strokeWidth="1.500" /></Svg></WinButton>
          <WinButton $w={45} $close><Svg w={8} h={8}><path d="M1 1l6 6M7 1L1 7" stroke="#fff" strokeWidth="1.700" /></Svg></WinButton>
        </WindowButtons>
      </TitleBar>
      <Orb><OfficeOrb /></Orb>
      <Tabs>
        {tabs.map(([t, w], i) => <Tab key={t} $w={w} $active={i === 0}>{t}</Tab>)}
        <Help><HelpIcon /></Help>
      </Tabs>
      <Ribbon>
        <Group $w={151}>
          <GroupBody>
            <BigButton $w={47} $top={4}><PasteIcon /><BigText $mt={3}>Paste</BigText><Down /></BigButton>
            <CommandList $p="0 0 0 2px">
              <Command $dim $gap={4}><Cut />Cut</Command>
              <Command $dim $gap={1} $ls={-.2}><Copy />Copy</Command>
              <Command $gap={1} $ls={-.36}><Painter />Format Painter</Command>
            </CommandList>
          </GroupBody>
          <GroupLabel $pr={5}><span>Clipboard</span><Launcher /></GroupLabel>
        </Group>
        <FontGroup />
        <ParagraphGroup />
        <StylesGroup />
        <Group $w={75}>
          <GroupBody>
            <CommandList $p="0 0 0 6px">
              <Command><Binoculars />Find&nbsp;<Down /></Command>
              <Command $gap={2} $ls={-.3}><ReplaceIcon />Replace</Command>
              <Command $gap={5} $ls={-.2}><Arrow />Select<Down /></Command>
            </CommandList>
          </GroupBody>
          <GroupLabel><span>Editing</span></GroupLabel>
        </Group>
      </Ribbon>

      <Workspace>
        <Main>
          <RulerRow>
            <TabSelector><TabBox><Svg w={6} h={6}><path d="M1 0v5h5" stroke="#26395d" strokeWidth="2" /></Svg></TabBox></TabSelector>
            <HRuler>
              {Array.from({ length: 68 }, (_, i) => <HMark key={i} $first={i === 0}>{mark(i - 8)}</HMark>)}
            </HRuler>
            <Marker $x={368} $y={5}>
              <Svg w={11} h={21}><path d="M1 .5h9v3L6 8.500l4 4v7.500H1v-7.500l4-4-4-5zM1 14.500h9" fill="#e4edf9" stroke="#617dab" /></Svg>
            </Marker>
            <Marker $x={992} $y={11}><Svg w={10} h={9}><path d="M5 .7l4 4v3.800H1V4.700z" fill="#dbe8f8" stroke="#617dab" /></Svg></Marker>
          </RulerRow>
          <Canvas>
            <VRuler>
              <VStrip>
                {Array.from({ length: 45 }, (_, i) => <VMark key={i} $first={i === 0}>{mark(i - 3, true)}</VMark>)}
              </VStrip>
            </VRuler>
            <Wave width="254" height="120" viewBox="0 0 254 120">
              <path d="M0 115Q110 40 254 14V0H0z" fill="#a3bde5" opacity=".8" />
              <path d="M0 93Q120 38 254 13V0H0z" fill="#adcbef" />
            </Wave>
            <Page>
              <Para $ls={.2}>Mother <Wavy $c="#3b8168">day</Wavy> invitation</Para>
              {paragraphs.map(([t, ls]) => <Para key={t} $ls={ls}>{t}</Para>)}
              <Table>
                {foods.flatMap((r, i) => r.map(([c, ls], j) => (
                  <TD key={c} $pl={cellPad(i, j)} $ls={ls}>{c === "Sno" ? <Wavy $c="#dd4b4b">Sno</Wavy> : c}</TD>
                )))}
              </Table>
            </Page>
          </Canvas>
        </Main>
        <Scroll>
          <SplitBar />
          <RulerToggle><Svg w={12} h={11}><rect x="3" y="3" width="8" height="6" fill="#fff" stroke="#444b5c" /><circle cx="3" cy="3" r="2" fill="#fff" stroke="#444b5c" /><path d="M6 7l3 3" stroke="#444b5c" /></Svg></RulerToggle>
          <Track>
            <ArrowBox $h={16}><Svg w={9} h={5}><path d="M0 5h9L4.500 0z" fill="#304d7f" /></Svg></ArrowBox>
            <Thumb><i /><i /><i /><i /></Thumb>
            <ArrowBox $h={18} $bottom><Svg w={9} h={5}><path d="M0 0h9L4.500 5z" fill="#3c5f95" /></Svg></ArrowBox>
          </Track>
          <Browse>
            <Svg w={6} h={7}><path d="M0 3.500h6L3 0zM0 7h6L3 3.500z" fill="#101624" /></Svg>
            <Svg w={8} h={8}><circle cx="4" cy="4" r="2.700" fill="#fff" stroke="#101624" strokeWidth="1.500" /></Svg>
            <Svg w={6} h={7}><path d="M0 0h6L3 3.500zM0 3.500h6L3 7z" fill="#101624" /></Svg>
          </Browse>
        </Scroll>
      </Workspace>

      <StatusBar>
        <StatusItem $w={77} $pl={8}>Page: 1 of 1</StatusItem>
        <StatusItem $w={70} $pl={9}>Words: 37</StatusItem>
        <StatusItem $w={34} $pl={8}>
          <Svg w={17} h={15}><path d="M1 8l6-3 8 3-7 5z" fill="#fff" stroke="#3c64a8" strokeWidth="1.200" /><path d="M1 8v2l7 4 7-4.500V8" stroke="#3c64a8" strokeWidth="1.200" /><path d="M7 2l7 7M14 1L8 9" stroke="#dc4025" strokeWidth="2" /></Svg>
        </StatusItem>
        <StatusItem $w={33} $pl={8}>
          <Svg w={17} h={14}><rect x="3" y="2" width="13" height="11" fill="#fff" stroke="#3c64a8" /><rect x="3" y="2" width="13" height="3" fill="#3c64a8" /><path d="M5 7.500h10M5 10h10" stroke="#6b8bc0" strokeDasharray="2 1" /><circle cx="3" cy="3" r="2.700" fill="#d9502f" /></Svg>
        </StatusItem>
        <Views>
          <View $on><Svg w={12} h={12}><rect x="1" y="1" width="10" height="10" fill="#fff" stroke="#6b6656" /><path d="M3 3.500h6M3 5.500h6M3 7.500h6M3 9.500h6" stroke="#888" /></Svg></View>
          <View><Svg w={12} h={12}><path d="M1 2l5 1.500L11 2v8l-5 1.500L1 10zM6 3.500v8" fill="#fff" stroke="#5e6778" /><path d="M2.500 5h2M2.500 7h2M7.500 5h2M7.500 7h2" stroke="#777" /></Svg></View>
          <View><Svg w={12} h={12}><rect x="1" y="1" width="8" height="9" fill="#fff" stroke="#5e6778" /><path d="M3 3.500h4M3 5.500h4" stroke="#777" /><circle cx="8.500" cy="8.500" r="3" fill="#3f88a5" /></Svg></View>
          <View><Svg w={12} h={12}><path d="M1 1.500h8M4 4h7M4 6.500h7M6 9h5M2 11h9" stroke="#707d93" /></Svg></View>
          <View><Svg w={12} h={12}><path d="M1 1.500h10M1 4h10M1 6.500h10M1 9h10M1 11h10" stroke="#5e6c84" /></Svg></View>
        </Views>
        <Zoom>
          <Percent>100%</Percent>
          <Svg w={139} h={18}>
            <path d="M16 9h100" stroke="#6482b2" /><path d="M16 10h100" stroke="#f1f7fe" />
            <circle cx="9" cy="9" r="7" fill="#edf2f9" stroke="#6b7c98" strokeWidth="1.300" /><path d="M6 9h6" stroke="#3c4a63" strokeWidth="1.800" />
            <circle cx="126" cy="9" r="7" fill="#edf2f9" stroke="#6b7c98" strokeWidth="1.300" /><path d="M122.500 9h7M126 5.500v7" stroke="#3c4a63" strokeWidth="1.800" />
            <path d="M62.500 3h8v8l-4 4-4-4z" fill="#eef3fb" stroke="#5f7ba8" /><path d="M66.500 5v6" stroke="#91a6c8" />
          </Svg>
        </Zoom>
      </StatusBar>

      <Taskbar>
        <Wallpaper width="1366" height="40" viewBox="0 0 1366 40">
          <rect width="1366" height="40" fill="#562b2a" />
          <rect x="359" width="53" height="40" fill="#421f20" />
          <rect x="412" width="550" height="40" fill="#a84858" />
          <path d="M412 0h12l4 40h-16z" fill="#b5505f" />
          <path d="M560 0h60l-30 40h-55z" fill="#9d4352" />
          <path d="M596 0h70l-36 18z" fill="#b58280" />
          <path d="M604 14L580 40h43l-16-26z" fill="#8d3c4b" />
          <path d="M604 14l22-14h28l-40 40z" fill="#8c5363" />
          <path d="M620 0l30 0 32 40h-60z" fill="#94596a" />
          <path d="M650 0h50l-10 40h-12z" fill="#bb8785" />
          <path d="M700 0h80l-50 40h-50z" fill="#954554" />
          <path d="M740 0h62l20 40h-110z" fill="#81485a" />
          <path d="M800 0h100l-60 40h-20z" fill="#866171" />
          <path d="M870 0h92v40H838z" fill="#7d5060" />
          <path d="M896 0h40l-20 12z" fill="#c58a83" />
          <path d="M922 0h32v40h-20z" fill="#b78581" />
          <rect x="954" width="412" height="40" fill="#6b3533" />
          <rect x="1034" y="7" width="332" height="33" fill="#c78d88" />
          <path d="M1034 40V7h95v33z" fill="#bd7f7b" />
          <rect x="1092" y="22" width="18" height="18" rx="2" fill="#bd463d" />
        </Wallpaper>
        <Start><Svg w={28} h={26}><path d="M0 4l12-1.700V12H0zM13 2l15-2v12H13zM0 13h12v10L0 21.300zM13 13h15v12.500L13 23.300z" fill="#fff" /></Svg></Start>
        {apps.map(([k, open, active]) => <AppButton key={k} $open={open} $active={active}>{art[k]}</AppButton>)}
        <Tray>
          <Timer>00:00:14</Timer>
          <TrayIcons>
            <TrayArrow><Svg w={10} h={6}><path d="M1 5h8L5 1z" fill="#fff" stroke="#8c5b58" strokeWidth=".5" /></Svg></TrayArrow>
            <Svg w={18} h={18}><path d="M3 1v4M6 1v4M1.500 5.500h6v4h-6zM4.500 10v5h4" stroke="#fff" strokeWidth="1.500" /><rect x="9" y="2" width="6.500" height="13" fill="#8d6361" stroke="#fff" strokeWidth="1.700" /></Svg>
            <Svg w={18} h={18}><path d="M2 6h3l5-4v14l-5-4H2z" fill="#fff" stroke="#735453" strokeWidth=".7" /><path d="M12 6c2 2 2 4 0 6M14 3.500c4 4 3 7 0 11" stroke="#fff" strokeWidth="1.200" /></Svg>
            <Svg w={18} h={27}><path d="M3 2v12" stroke="#fff" strokeWidth="2" /><path d="M5 3c4 2 6-1 11 1l-3 3 0 3c-3-1-5 1-8 0z" fill="#fff" stroke="#664443" strokeWidth=".8" /><path d="M1 25c2-7 8-5 5-1-2 3-5 1-4 0M6 18c4 3 7-2 5-3-3-1-5 4-4 7M12 14l5-8" stroke="#623b39" strokeWidth="1.700" /></Svg>
            <Svg w={17} h={16}><path d="M1 12h2v2H1zM4 10h2.500v4H4zM7.500 7.500H10V14H7.500zM11 5h2.500v9H11zM14.500 2H17v12h-2.500z" fill="#fff" /></Svg>
            <Svg w={10} h={16}><path d="M1 9.500h9" stroke="#8d5754" /></Svg>
          </TrayIcons>
        </Tray>
      </Taskbar>

      <Watermark><div>Activate Windows</div><div>Go to Settings to activate Windows.</div></Watermark>
      <Pointer>
        <Svg w={22} h={22}><circle cx="10.500" cy="12" r="9.500" fill="#f4e70b" /><path d="M9.500 4h2.500M13 4h2.500M9.500 19h2.500M13 19h2.500M12.500 4.500v14" stroke="#24241c" strokeWidth="1.200" /></Svg>
      </Pointer>
    </Shell>
  );
}
